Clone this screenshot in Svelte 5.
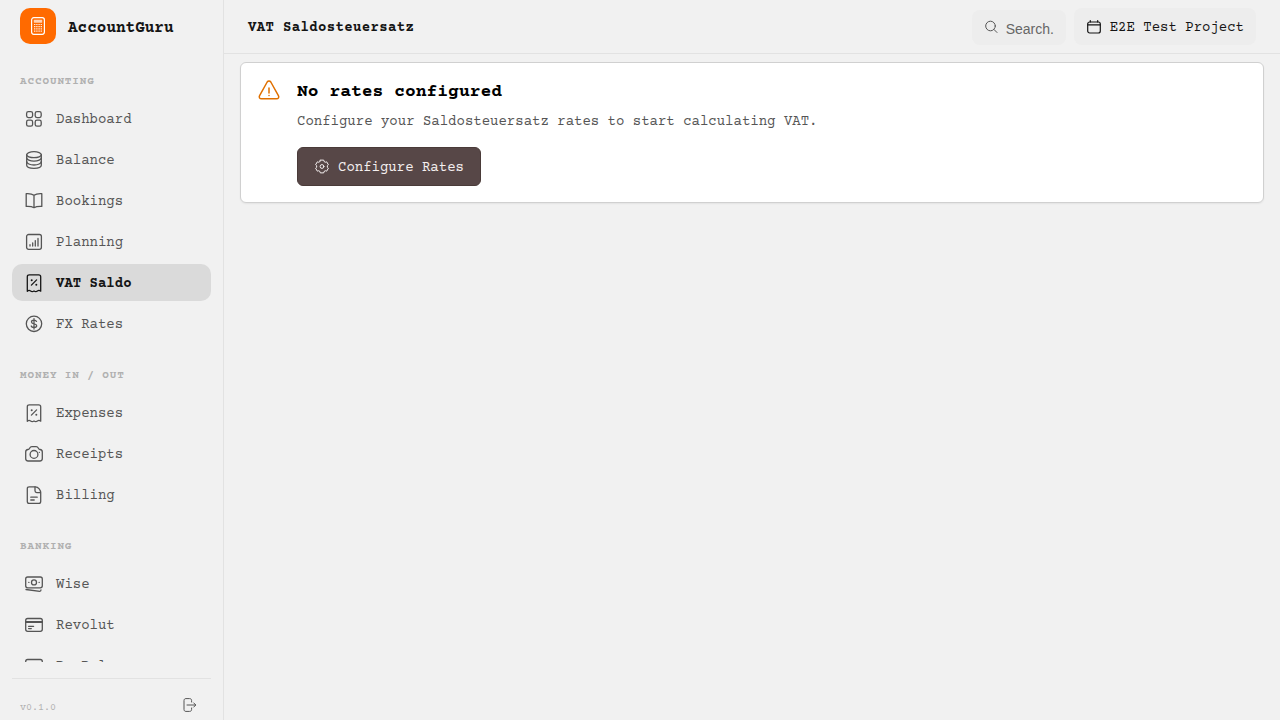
<script lang="ts">
  type Item = { label: string; icon: string };

  let active = $state("VAT Saldo");
  let query = $state("");

  const groups: { title: string; items: Item[] }[] = [
    {
      title: "Accounting",
      items: [
        { label: "Dashboard", icon: "grid" },
        { label: "Balance", icon: "coins" },
        { label: "Bookings", icon: "book" },
        { label: "Planning", icon: "chart" },
        { label: "VAT Saldo", icon: "receipt" },
        { label: "FX Rates", icon: "dollar" },
      ],
    },
    {
      title: "Money In / Out",
      items: [
        { label: "Expenses", icon: "receipt" },
        { label: "Receipts", icon: "camera" },
        { label: "Billing", icon: "file" },
      ],
    },
    {
      title: "Banking",
      items: [
        { label: "Wise", icon: "cash" },
        { label: "Revolut", icon: "card" },
        { label: "PayPal", icon: "card" },
      ],
    },
  ];

  // six-toothed gear outline, [angle offset, radius] per tooth
  function gear(cx: number, cy: number) {
    const shape = [[-15, 6.6], [15, 6.6], [22, 5.4], [38, 5.4]];
    const points = [];
    for (let tooth = 0; tooth < 6; tooth++) {
      for (const [offset, r] of shape) {
        const a = ((tooth * 60 + offset - 90) * Math.PI) / 180;
        points.push(`${(cx + r * Math.cos(a)).toFixed(2)} ${(cy + r * Math.sin(a)).toFixed(2)}`);
      }
    }
    return `M${points.join("L")}z`;
  }
</script>

{#snippet icon(name: string)}
  <svg class="icon" viewBox="0 0 20 20" aria-hidden="true">
    {#if name === "grid"}
      <rect x="2.6" y="2.6" width="6" height="6" rx="1.8" />
      <rect x="11.2" y="2.6" width="6" height="6" rx="1.8" />
      <rect x="2.6" y="11.2" width="6" height="6" rx="1.8" />
      <rect x="11.2" y="11.2" width="6" height="6" rx="1.8" />
    {:else if name === "coins"}
      <ellipse cx="10" cy="4.7" rx="7.3" ry="3" />
      <path d="M2.7 4.7v10.6c0 1.700 3.200 3 7.300 3s7.300-1.300 7.300-3V4.700" />
      <path d="M2.700 7.800c0 1.900 3.200 3.400 7.300 3.400s7.300-1.500 7.300-3.400M2.700 11.600c0 1.900 3.200 3.400 7.300 3.400s7.300-1.500 7.300-3.400" />
    {:else if name === "book"}
      <path d="M10 4.3C8 2.8 5.2 2.5 2.2 2.700v12.700c3-.2 5.800.1 7.800 1.300 2-1.200 4.800-1.500 7.800-1.300V2.700C14.800 2.500 12 2.800 10 4.300zM10 4.300v12.400" />
    {:else if name === "chart"}
      <rect x="2.6" y="2.5" width="14.8" height="14.8" rx="2" />
      <path d="M6 14v-1.300M8.700 14v-3.200M11.300 14V8.600M14 14V6.400" />
    {:else if name === "receipt"}
      <path d="M3.300 18.200V3.800c0-1.300.8-2 2-2h9.400c1.200 0 2 .7 2 2v14.400c-1-.9-2.200-1.100-3.300-.2-1.100.8-2.200.8-3.400-.1-1.200.9-2.300.9-3.400.1-1.100-.9-2.300-.7-3.300.2z" />
      <path d="M7.400 12.100l5.200-5.200" />
      <circle class="dot" cx="7.700" cy="7.200" r="1" />
      <circle class="dot" cx="12.300" cy="11.800" r="1" />
    {:else if name === "dollar"}
      <circle cx="10" cy="9.800" r="7.700" />
      <path d="M12.500 7.400c-.4-.9-1.300-1.300-2.500-1.300-1.500 0-2.500.7-2.500 1.800 0 2.500 5.200 1.300 5.200 3.900 0 1.100-1.100 1.800-2.700 1.800-1.400 0-2.500-.6-2.800-1.600M10 4.600V15" />
    {:else if name === "camera"}
      <path d="M1.700 8c0-1.600.8-2.400 2.300-2.500.8 0 1.200-.4 1.600-1.200.5-1 1.100-1.600 2.300-1.600h4.200c1.200 0 1.800.6 2.300 1.600.4.8.8 1.200 1.600 1.200 1.500.1 2.300.9 2.300 2.500v6.500c0 1.700-.8 2.500-2.500 2.500H4.200c-1.700 0-2.500-.8-2.500-2.500z" />
      <circle cx="10" cy="10.400" r="3.900" />
      <path d="M15.300 8.300h.1" />
    {:else if name === "file"}
      <path d="M11.300 1.800H5.200c-1.300 0-1.900.7-1.900 1.900v12.700c0 1.200.7 1.900 1.900 1.900h9.600c1.200 0 1.900-.7 1.900-1.900V7.800c0-2.600-2.200-6-5.400-6z" />
      <path d="M11 2v3.800c0 1.200.6 1.800 1.700 1.800h3.800M6.800 12.200h6.400M6.800 15h3.400" />
    {:else if name === "cash"}
      <rect x="1.700" y="3" width="16.600" height="10.800" rx="2" />
      <circle cx="10" cy="8.400" r="2.500" />
      <path d="M4.800 8.400h.1M15.100 8.400h.1M2 15.500l13.800 1.800c.8 0 1.200-.7 1.200-1.500" />
    {:else if name === "card"}
      <rect x="1.700" y="3.500" width="16.600" height="12.800" rx="2" />
      <path class="thick" d="M2 7h16" />
      <path d="M4.600 11.300h5M4.600 13.600h2.700" />
    {/if}
  </svg>
{/snippet}

<div class="app">
  <aside class="sidebar">
    <div class="brand">
      <div class="logo">
        <svg class="calc" viewBox="0 0 20 20" aria-hidden="true">
          <rect x="3.600" y="1.700" width="12.800" height="16.600" rx="2.200" />
          <rect class="screen" x="5.800" y="3.800" width="8.400" height="3" rx=".6" />
          <path class="keys" d="M6 8.500h8M6 10.700h8M6 12.900h8M6 15.100h8" />
        </svg>
      </div>
      <span class="brand-name label">AccountGuru</span>
    </div>

    <nav>
      {#each groups as group}
        <section>
          <h2>{group.title}</h2>
          <ul>
            {#each group.items as item}
              <li>
                <a
                  href="#{item.label}"
                  class:active={active === item.label}
                  aria-current={active === item.label ? "page" : undefined}
                  onclick={() => (active = item.label)}
                >
                  {@render icon(item.icon)}
                  <span class="label">{item.label}</span>
                </a>
              </li>
            {/each}
          </ul>
        </section>
      {/each}
    </nav>

    <footer>
      <span class="label">v0.1.0</span>
      <button class="logout" aria-label="Log out">
        <svg viewBox="0 0 16 16" aria-hidden="true">
          <path d="M9.600 5V3.600c0-1.300-.7-2-2-2H4c-1.300 0-2 .7-2 2v8.800c0 1.300.7 2 2 2h3.600c1.300 0 2-.7 2-2V11" />
          <path d="M5 8h8.600M11.700 5.900L13.800 8l-2.100 2.100" />
        </svg>
      </button>
    </footer>
  </aside>

  <div class="page">
    <header>
      <h1 class="label">VAT Saldosteuersatz</h1>
      <div class="tools">
        <label class="search">
          <svg viewBox="0 0 16 16" aria-hidden="true">
            <circle cx="6.500" cy="7" r="4.800" />
            <path d="M10 10.500l3 3" />
          </svg>
          <input type="text" placeholder="Search..." aria-label="Search" bind:value={query} />
        </label>
        <button class="project">
          <svg viewBox="0 0 16 16" aria-hidden="true">
            <rect x="1.700" y="3" width="12.600" height="11" rx="2" />
            <path d="M2 5.900h12M4.300 1.500V3M11.700 1.500V3" />
          </svg>
          <span class="label">E2E Test Project</span>
        </button>
      </div>
    </header>

    <main>
      <div class="card">
        <svg class="warning" viewBox="0 0 24 24" aria-hidden="true">
          <path d="M10.200 3L2.600 16.600c-.9 1.700 0 3.200 1.900 3.200h15c1.900 0 2.800-1.500 1.900-3.200L13.800 3c-.9-1.500-2.700-1.500-3.600 0z" />
          <path d="M12 9v5M12 16.400v.2" />
        </svg>
        <div class="card-body">
          <h3>No rates configured</h3>
          <p class="label">Configure your Saldosteuersatz rates to start calculating VAT.</p>
          <button class="primary">
            <svg viewBox="0 0 16 16" aria-hidden="true">
              <path d={gear(8, 7.5)} />
              <circle cx="8" cy="7.500" r="1.900" />
            </svg>
            <span class="label">Configure Rates</span>
          </button>
        </div>
      </div>
    </main>
  </div>
</div>

<style>
  :global(body) {
    margin: 0;
    background: #f1f1f1;
  }

  .app {
    display: flex;
    height: 100vh;
    overflow: hidden;
    font-family: "Courier Prime", "Courier New", "Liberation Mono", monospace;
    font-size: 14px;
    line-height: 21px;
    color: #151515;
    background: #f1f1f1;
  }

  h1, h2, h3, p, ul {
    margin: 0;
    padding: 0;
  }

  ul {
    list-style: none;
  }

  button, a {
    font: inherit;
    color: inherit;
    cursor: pointer;
  }

  svg {
    flex: none;
    width: 16px;
    height: 16px;
    fill: none;
    stroke: currentColor;
    stroke-width: 1;
    stroke-linecap: round;
    stroke-linejoin: round;
  }

  /* the typeface sits high in its line, so labels get their space on top */
  .label {
    display: block;
    padding-top: 4px;
    line-height: 17px;
  }

  .sidebar {
    box-sizing: border-box;
    flex: none;
    display: flex;
    flex-direction: column;
    width: 224px;
    padding: 0 12px;
    border-right: 1px solid #e2e2e2;
  }

  .brand {
    display: flex;
    align-items: center;
    gap: 12px;
    padding: 8px;
  }

  .logo {
    display: flex;
    align-items: center;
    justify-content: center;
    width: 36px;
    height: 36px;
    border-radius: 10px;
    color: #fff;
    background: #ff6a00;
  }

  .logo .calc {
    width: 20px;
    height: 20px;
    stroke-width: 1.2;
  }

  .calc .screen {
    fill: rgba(255, 255, 255, 0.7);
    stroke: none;
  }

  .calc .keys {
    stroke-linecap: butt;
    stroke-dasharray: 1.4 0.8;
    stroke-opacity: 0.85;
  }

  .brand-name {
    font-size: 16px;
    font-weight: 700;
  }

  nav {
    flex: 1;
    min-height: 0;
    margin-top: 22px;
    overflow: hidden;
  }

  section {
    margin-bottom: 26px;
  }

  h2 {
    margin-bottom: 10px;
    padding-left: 8px;
    font-size: 11px;
    line-height: 16px;
    font-weight: 700;
    letter-spacing: 0.08em;
    text-transform: uppercase;
    color: #b0b0b0;
  }

  nav ul {
    display: flex;
    flex-direction: column;
    gap: 4px;
  }

  nav a {
    display: flex;
    align-items: center;
    gap: 12px;
    padding: 8px 12px;
    border-radius: 10px;
    color: #555;
    text-decoration: none;
  }

  nav a.active {
    font-weight: 700;
    color: #151515;
    background: #dadada;
  }

  .icon {
    width: 20px;
    height: 20px;
    stroke-width: 1.3;
  }

  .icon .dot {
    fill: currentColor;
    stroke: none;
  }

  .icon .thick {
    stroke-width: 2;
  }

  footer {
    display: flex;
    align-items: center;
    justify-content: space-between;
    margin-top: 16px;
    padding: 12px 8px 1px;
    border-top: 1px solid #e2e2e2;
    font-size: 10px;
    color: #b0b0b0;
  }

  .logout {
    display: flex;
    padding: 6px 5px;
    border: 0;
    color: #555;
    background: none;
  }

  .page {
    flex: 1;
    min-width: 0;
  }

  header {
    display: flex;
    align-items: center;
    justify-content: space-between;
    padding: 8px 24px;
    border-bottom: 1px solid #e2e2e2;
  }

  h1 {
    font-size: 14px;
    font-weight: 700;
    letter-spacing: 0.025em;
  }

  .tools {
    display: flex;
    align-items: flex-end;
    gap: 8px;
  }

  .search, .project {
    display: flex;
    align-items: center;
    gap: 8px;
    border: 0;
    border-radius: 8px;
    background: #ededed;
  }

  .search {
    align-items: flex-start;
    gap: 6px;
    padding: 9px 12px 6px;
    color: #555;
  }

  .search input {
    width: 48px;
    height: 20px;
    padding: 0;
    border: 0;
    outline: none;
    font-family: "Liberation Sans", Arial, sans-serif;
    font-size: 14px;
    color: inherit;
    background: none;
  }

  .search input::placeholder {
    color: #666;
  }

  .project {
    padding: 8px 12px;
    color: #151515;
  }

  .project svg {
    stroke-width: 1.2;
  }

  main {
    padding: 8px 16px;
  }

  .card {
    display: flex;
    gap: 16px;
    padding: 16px;
    border: 1px solid #d0d0d0;
    border-radius: 6px;
    background: #fff;
    box-shadow: 0 1px 2px rgba(0, 0, 0, 0.06);
  }

  .warning {
    width: 24px;
    height: 24px;
    stroke-width: 1.5;
    color: #e07000;
  }

  h3 {
    margin-bottom: 8px;
    padding-top: 4px;
    font-size: 18px;
    line-height: 19px;
    font-weight: 700;
    color: #000;
  }

  .card p {
    margin-bottom: 16px;
    color: #555;
  }

  .primary {
    display: flex;
    align-items: center;
    gap: 8px;
    padding: 8px 16px;
    border: 1px solid #4a3b39;
    border-radius: 6px;
    color: #f5f0f0;
    background: #574747;
  }
</style>
